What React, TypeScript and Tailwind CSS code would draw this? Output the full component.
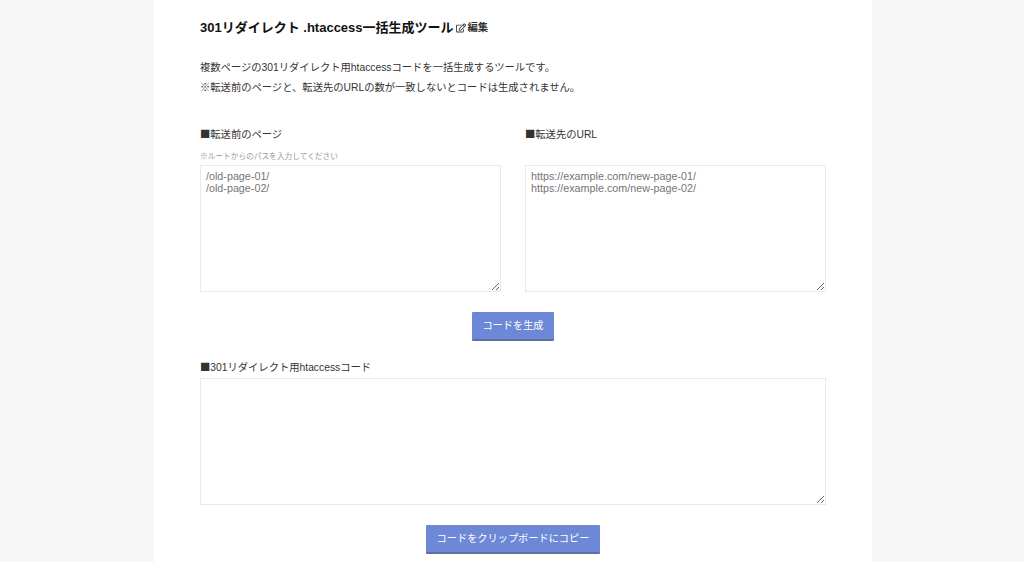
import React from 'react';
import { FaRegEdit } from 'react-icons/fa';

const font = "font-['Liberation_Sans','Noto_Sans_CJK_JP',sans-serif]";

function Field({ value }: { value?: string }) {
  return (
    <textarea
      readOnly
      value={value ?? ''}
      className="block w-full h-[127px] border border-[#e9e9e9] bg-white px-[5px] py-[4px] text-[10.75px] leading-[12px] text-[#757575] resize-y outline-none font-['Liberation_Sans',sans-serif]"
    />
  );
}

function Label({ children }: { children: React.ReactNode }) {
  return (
    <p className="text-[10.3px] leading-[14px] text-[#333]">
      <span className="font-['Noto_Sans_CJK_JP',sans-serif]">■</span>
      {children}
    </p>
  );
}

function ActionButton({ children }: { children: React.ReactNode }) {
  return (
    <button className="h-[29px] px-[10.5px] bg-[#6c88d6] border-b-2 border-[#5f6f9e] rounded-[1px] text-[10.2px] text-white">
      {children}
    </button>
  );
}

export default function App() {
  return (
    <div className={`h-[562px] overflow-hidden bg-[#f7f7f7] ${font}`}>
      <div className="w-[718px] h-full bg-white px-[46px] ml-[154px]">
        <h1 className="flex items-center pt-[18px] h-[37px] text-[#111]">
          <span className="text-[13px] font-bold leading-[18px]">301リダイレクト .htaccess一括生成ツール</span>
          <span className="ml-[2px] flex items-center gap-[2px] text-[10.3px] font-bold text-[#333]">
            <FaRegEdit className="w-[10px] h-[10px]" />
            編集
          </span>
        </h1>

        <div className="mt-[21px] text-[10.3px] leading-[20px] text-[#333]">
          <p>複数ページの301リダイレクト用htaccessコードを一括生成するツールです。</p>
          <p>※転送前のページと、転送先のURLの数が一致しないとコードは生成されません。</p>
        </div>

        <div className="mt-[29px] flex justify-between">
          <div className="w-[301px]">
            <Label>転送前のページ</Label>
            <p className="mt-[9px] mb-[3px] text-[7.7px] leading-[11px] text-[#999]">※ルートからのパスを入力してください</p>
            <Field value={'/old-page-01/\n/old-page-02/'} />
          </div>
          <div className="w-[301px] flex flex-col justify-between">
            <Label>転送先のURL</Label>
            <Field value={'https://example.com/new-page-01/\nhttps://example.com/new-page-02/'} />
          </div>
        </div>

        <div className="mt-[20px] flex justify-center">
          <ActionButton>コードを生成</ActionButton>
        </div>

        <div className="mt-[19px] mb-[3px]">
          <Label>301リダイレクト用htaccessコード</Label>
        </div>
        <Field />

        <div className="mt-[20px] flex justify-center">
          <ActionButton>コードをクリップボードにコピー</ActionButton>
        </div>
      </div>
    </div>
  );
}
